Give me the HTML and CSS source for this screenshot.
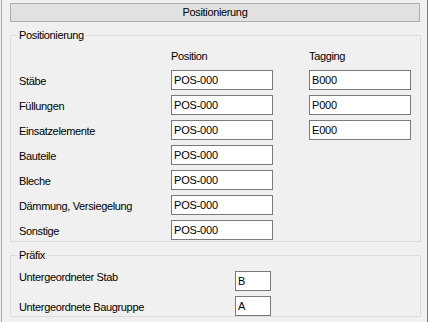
FILE: index.html
```html
<!DOCTYPE html>
<html lang="de">
<head>
    <meta charset="UTF-8">
    <meta name="viewport" content="width=device-width, initial-scale=1.0">
    <title>Positionierung</title>
    <link rel="stylesheet" href="styles.css">
</head>
<body>
    <div class="window">
        <div class="title-bar">Positionierung</div>

        <div class="group group-pos">
            <span class="legend">Positionierung</span>
            <div class="col-head">
                <span class="label"></span>
                <span class="head-pos">Position</span>
                <span class="head-tag">Tagging</span>
            </div>
            <div class="row">
                <label class="label">Stäbe</label>
                <input class="field field-pos" value="POS-000">
                <input class="field field-tag" value="B000">
            </div>
            <div class="row">
                <label class="label">Füllungen</label>
                <input class="field field-pos" value="POS-000">
                <input class="field field-tag" value="P000">
            </div>
            <div class="row">
                <label class="label">Einsatzelemente</label>
                <input class="field field-pos" value="POS-000">
                <input class="field field-tag" value="E000">
            </div>
            <div class="row">
                <label class="label">Bauteile</label>
                <input class="field field-pos" value="POS-000">
            </div>
            <div class="row">
                <label class="label">Bleche</label>
                <input class="field field-pos" value="POS-000">
            </div>
            <div class="row">
                <label class="label">Dämmung, Versiegelung</label>
                <input class="field field-pos" value="POS-000">
            </div>
            <div class="row">
                <label class="label">Sonstige</label>
                <input class="field field-pos" value="POS-000">
            </div>
        </div>

        <div class="group group-prefix">
            <span class="legend">Präfix</span>
            <div class="row prefix-row">
                <label class="label label-wide label-high">Untergeordneter Stab</label>
                <input class="field field-small" value="B">
            </div>
            <div class="row prefix-row">
                <label class="label label-wide">Untergeordnete Baugruppe</label>
                <input class="field field-small" value="A">
            </div>
        </div>
    </div>
</body>
</html>
```

FILE: styles.css
```css
* {
    box-sizing: border-box;
}
body {
    margin: 0;
    padding: 0 0 0 1px;
    background: #f0f0f0;
    font-family: "Liberation Sans", Arial, sans-serif;
    font-size: 11px;
    letter-spacing: -0.35px;
    color: #000;
}
.window {
    width: 427px;
    height: 322px;
    padding-top: 3px;
    border-left: 1px solid #a7a7a7;
    border-right: 1px solid #7d7d7d;
    background: #f0f0f0;
}
.title-bar {
    width: 410px;
    height: 19px;
    margin-left: 8px;
    border: 1px solid #adadad;
    background: #e1e1e1;
    text-align: center;
    line-height: 17px;
}
.group {
    width: 411px;
    margin-left: 8px;
    border: 1px solid #dcdcdc;
    padding: 0 0 0 8px;
}
.group-pos {
    margin-top: 13px;
    padding-bottom: 1px;
}
.group-prefix {
    margin-top: 13px;
}
.legend {
    display: block;
    width: max-content;
    height: 13px;
    line-height: 13px;
    margin: -7px 0 0 -2px;
    padding: 0 2px;
    background: #f0f0f0;
}
.col-head {
    display: flex;
    height: 13px;
    line-height: 13px;
    margin-top: 8px;
}
.head-pos {
    width: 138px;
}
.row {
    display: flex;
    align-items: center;
    height: 20px;
    margin-top: 5px;
}
.col-head + .row {
    margin-top: 7px;
}
.label {
    width: 152px;
    flex: none;
    padding-top: 1px;
}
.label-wide {
    width: 216px;
}
.label-high {
    padding: 0 0 9px;
}
.prefix-row:first-of-type {
    margin-top: 9px;
}
.field {
    height: 20px;
    flex: none;
    border: 1px solid #7a7a7a;
    background: #fff;
    padding: 0 2px;
    font-family: "Liberation Sans", Arial, sans-serif;
    font-size: 11px;
    letter-spacing: -0.2px;
    color: #000;
    outline: none;
}
.field-pos {
    width: 102px;
    margin-right: 36px;
}
.field-tag {
    width: 102px;
}
.field-small {
    width: 36px;
}
```
